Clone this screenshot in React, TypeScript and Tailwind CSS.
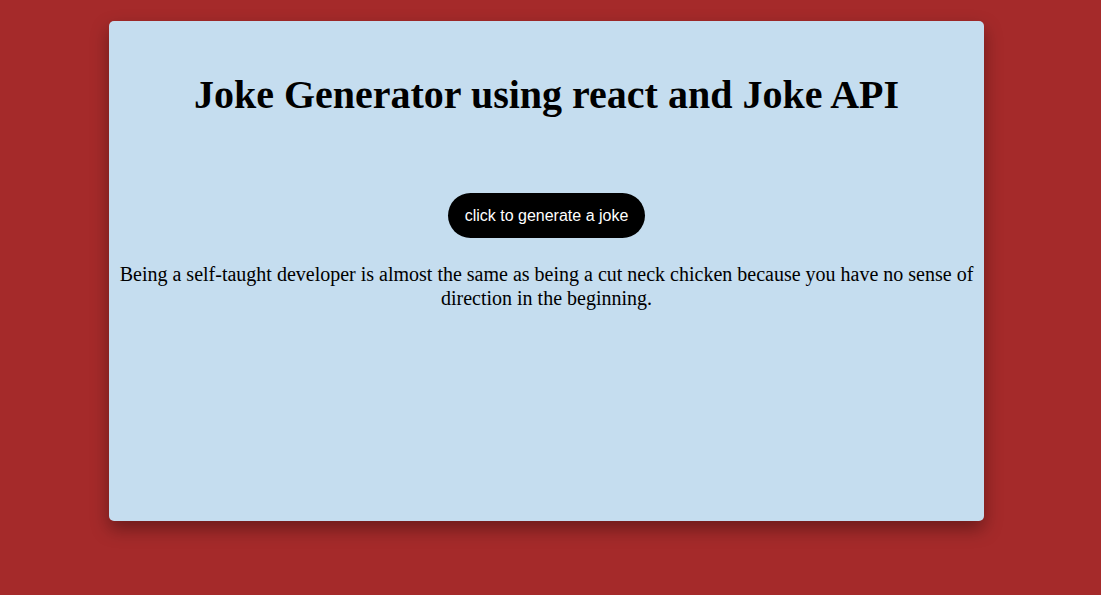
import React from 'react';

const joke =
  'Being a self-taught developer is almost the same as being a cut neck chicken because you have no sense of direction in the beginning.';

const App = () => {
  return (
    <div className="min-h-[595px] bg-[#a52a2a] pt-[21px] pl-[109px]">
      <div className="w-[875px] h-[500px] bg-[#c5ddef] rounded-[5px] shadow-[0_8px_18px_rgba(0,0,0,0.35)] flex flex-col items-center text-center pt-[51px]">
        <h1 className="font-['Liberation_Serif',serif] font-bold text-[40px] leading-[46px] text-black">
          Joke Generator using react and Joke API
        </h1>
        <button className="mt-[75px] h-[45px] px-[17px] rounded-full bg-black text-white font-['Liberation_Sans',Arial,sans-serif] text-[16px]">
          click to generate a joke
        </button>
        <p className="mt-[24px] font-['Liberation_Serif',serif] text-[20px] leading-[24px] text-black">
          {joke}
        </p>
      </div>
    </div>
  );
};

export default App;
